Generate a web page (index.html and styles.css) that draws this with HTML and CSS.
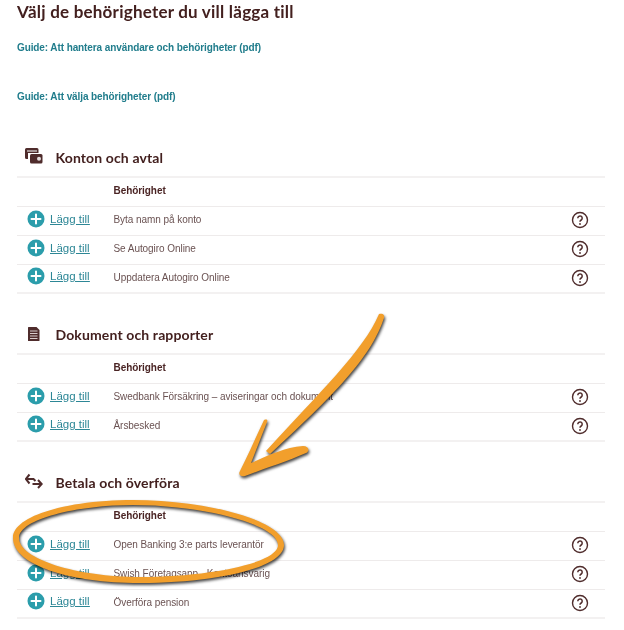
FILE: index.html
```html
<!DOCTYPE html>
<html lang="sv">
<head>
  <meta charset="UTF-8" />
  <title>Välj behörigheter</title>
  <link rel="stylesheet" href="styles.css">
</head>
<body>
  <svg width="0" height="0" class="defs">
    <symbol id="plus" viewBox="0 0 18 18">
      <circle cx="9" cy="9" r="8.5" fill="#2b9dab" />
      <path d="M9 4.5v9M4.500 9h9" stroke="#fff" stroke-width="2" stroke-linecap="round" />
    </symbol>
    <symbol id="help" viewBox="0 0 18 18">
      <circle cx="9" cy="9" r="7.5" fill="none" stroke="#4f2c2c" stroke-width="1.4" />
      <path d="M6.800 7.200a2.200 2.200 0 1 1 3.400 1.800c-.8.500-1.200.9-1.200 1.800" fill="none" stroke="#4f2c2c" stroke-width="1.500" />
      <circle cx="9" cy="13" r=".9" fill="#4f2c2c" />
    </symbol>
  </svg>

  <main class="page">
    <h1>Välj de behörigheter du vill lägga till</h1>
    <p class="guide guide-first"><a href="#">Guide: Att hantera användare och behörigheter (pdf)</a></p>
    <p class="guide guide-second"><a href="#">Guide: Att välja behörigheter (pdf)</a></p>

    <section class="group group-accounts">
      <h2>
        <svg class="group-icon" viewBox="0 0 18 18">
          <path d="M1.500 2h10.500a1.500 1.500 0 0 1 1.500 1.500V7H3v6H1.500A1.500 1.500 0 0 1 0 11.500v-8A1.500 1.500 0 0 1 1.500 2z" fill="#4f2c2c" />
          <path d="M2 5h10" stroke="#fff" stroke-width="1" />
          <rect x="5" y="8" width="12.500" height="9.500" rx="1.500" fill="#4f2c2c" />
          <circle cx="14" cy="12.700" r="2" fill="#e6dfdf" />
        </svg>
        Konton och avtal
      </h2>
      <table>
        <thead><tr><th></th><th>Behörighet</th><th></th></tr></thead>
        <tbody>
          <tr><td class="add"><a href="#"><svg class="plus"><use href="#plus" /></svg><span>Lägg till</span></a></td><td>Byta namn på konto</td><td class="info"><svg class="help"><use href="#help" /></svg></td></tr>
          <tr><td class="add"><a href="#"><svg class="plus"><use href="#plus" /></svg><span>Lägg till</span></a></td><td>Se Autogiro Online</td><td class="info"><svg class="help"><use href="#help" /></svg></td></tr>
          <tr><td class="add"><a href="#"><svg class="plus"><use href="#plus" /></svg><span>Lägg till</span></a></td><td>Uppdatera Autogiro Online</td><td class="info"><svg class="help"><use href="#help" /></svg></td></tr>
        </tbody>
      </table>
    </section>

    <section class="group group-docs">
      <h2>
        <svg class="group-icon" viewBox="0 0 18 18">
          <path d="M3.500 4h8l3 3v10.500a.5.5 0 0 1-.5.5H3.500a.5.5 0 0 1-.5-.5v-13a.5.5 0 0 1 .5-.5z" fill="#4f2c2c" />
          <path d="M5 8h7.500M5 10.500h7.500M5 13h7.500M5 15.500h7.500" stroke="#d8cccc" stroke-width="1" />
        </svg>
        Dokument och rapporter
      </h2>
      <table>
        <thead><tr><th></th><th>Behörighet</th><th></th></tr></thead>
        <tbody>
          <tr><td class="add"><a href="#"><svg class="plus"><use href="#plus" /></svg><span>Lägg till</span></a></td><td>Swedbank Försäkring – aviseringar och dokument</td><td class="info"><svg class="help"><use href="#help" /></svg></td></tr>
          <tr><td class="add"><a href="#"><svg class="plus"><use href="#plus" /></svg><span>Lägg till</span></a></td><td>Årsbesked</td><td class="info"><svg class="help"><use href="#help" /></svg></td></tr>
        </tbody>
      </table>
    </section>

    <section class="group group-pay">
      <h2>
        <svg class="group-icon" viewBox="0 0 18 18">
          <path d="M4.500 3.500 0.800 8l3.700 4.500M0.800 8H8.500l2 2" fill="none" stroke="#4f2c2c" stroke-width="2" />
          <path d="M7.500 13h9M13 9l3.700 4L13 17" fill="none" stroke="#4f2c2c" stroke-width="2" />
        </svg>
        Betala och överföra
      </h2>
      <table>
        <thead><tr><th></th><th>Behörighet</th><th></th></tr></thead>
        <tbody>
          <tr><td class="add"><a href="#"><svg class="plus"><use href="#plus" /></svg><span>Lägg till</span></a></td><td>Open Banking 3:e parts leverantör</td><td class="info"><svg class="help"><use href="#help" /></svg></td></tr>
          <tr><td class="add"><a href="#"><svg class="plus"><use href="#plus" /></svg><span>Lägg till</span></a></td><td>Swish Företagsapp - Kontoansvarig</td><td class="info"><svg class="help"><use href="#help" /></svg></td></tr>
          <tr><td class="add"><a href="#"><svg class="plus"><use href="#plus" /></svg><span>Lägg till</span></a></td><td>Överföra pension</td><td class="info"><svg class="help"><use href="#help" /></svg></td></tr>
        </tbody>
      </table>
    </section>
  </main>

  <!-- hand drawn marks on top of the screenshot -->
  <svg class="marks" viewBox="0 0 624 630">
    <path d="M379 314C383 313 385 315 384 318C372 354 342 388 270 454L266 451C318 394 364 350 379 314Z" fill="#f29f2c" />
    <path d="M264 420C267 419 268 420 267 422L251 463C270 455 285 447 303 446C309 446 310 451 306 453C288 461 266 468 245 476C240 477 238 474 240 471C248 455 256 437 264 420Z" fill="#f29f2c" />
    <path fill-rule="evenodd" fill="#f29f2c" d="M133 500C205 500 284 520 284 545C284 568 215 583 140 583C70 583 13 565 13 538C13 515 70 500 133 500ZM133 505C77 505 19 519 19 538C19 559 77 577 140 577C209 577 278 563 278 545C278 524 202 505 133 505Z" />
  </svg>
</body>
</html>
```

FILE: styles.css
```css
* {
  box-sizing: border-box;
}

html, body {
  height: 630px;
  overflow: hidden;
}

body {
  margin: 0;
  background: #fff;
  color: #4f2c2c;
  font-family: "Liberation Sans", Arial, sans-serif;
  font-size: 10px;
  letter-spacing: -0.06px;
  position: relative;
}

.defs {
  position: absolute;
}

.page {
  width: 605px;
  padding: 0 0 0 17px;
  filter: blur(0.35px);
}

h1 {
  margin: 0;
  padding-top: 1px;
  height: 41px;
  font-family: Lato, sans-serif;
  font-size: 17px;
  line-height: 22px;
  font-weight: 700;
  letter-spacing: 0.22px;
  color: #43201f;
}

.guide {
  margin: 0;
  line-height: 14px;
  font-weight: bold;
  letter-spacing: -0.1px;
}

.guide a {
  color: #217d8c;
  text-decoration: none;
}

.guide-second {
  margin-top: 35px;
}

.group-accounts {
  margin-top: 37px;
}

.group-docs,
.group-pay {
  margin-top: 24px;
}

h2 {
  display: flex;
  align-items: center;
  height: 35px;
  margin: 0;
  padding: 0 0 2px 8px;
  font-family: Lato, sans-serif;
  font-size: 14px;
  font-weight: 700;
  letter-spacing: 0.13px;
  color: #43201f;
}

.group-icon {
  width: 18px;
  height: 18px;
  margin-right: 12.500px;
  flex: none;
  position: relative;
  top: -2.500px;
}

table {
  width: 100%;
  border-collapse: collapse;
  table-layout: fixed;
  border-top: 2px solid #f3f1f1;
}

th, td {
  height: 29px;
  padding: 0 0 2px;
  text-align: left;
  border-bottom: 1px solid #eeebeb;
  color: #6a5252;
}

tbody tr:last-child td {
  border-bottom: 2px solid #f3f1f1;
}

th {
  color: #4a2424;
  font-weight: bold;
}

th:first-child, td.add {
  width: 96.500px;
}

td.add {
  padding-bottom: 4px;
}

th:last-child, td.info {
  width: 40px;
  padding: 0 0 1px 5.500px;
}

.add a {
  display: flex;
  align-items: center;
  padding-left: 10px;
  color: #2d8796;
  font-size: 11.500px;
  letter-spacing: 0;
}

.add span {
  margin-left: 5px;
  text-decoration: underline;
}

.plus {
  width: 18px;
  height: 18px;
  flex: none;
}

.help {
  display: block;
  width: 18px;
  height: 18px;
}

.marks {
  position: absolute;
  left: 0;
  top: 0;
  width: 624px;
  height: 630px;
  filter: drop-shadow(1.500px 2px 1.500px rgba(0, 0, 0, 0.75));
}
```
